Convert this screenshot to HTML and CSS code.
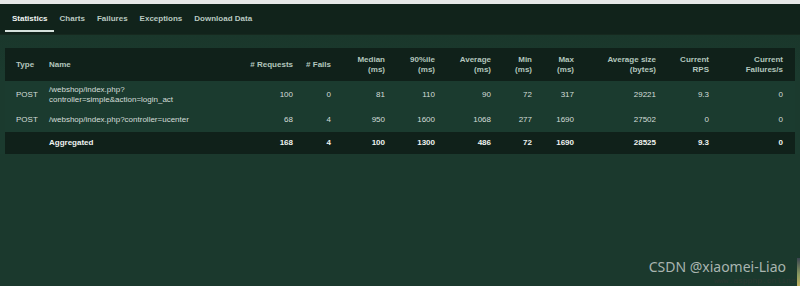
FILE: index.html
```html
<!DOCTYPE html>
<html>
<head>
<meta charset="utf-8">
<link rel="stylesheet" href="styles.css">
</head>
<body>
<div class="topstrip"></div>
<nav class="tabs">
  <a class="tab active">Statistics</a>
  <a class="tab">Charts</a>
  <a class="tab">Failures</a>
  <a class="tab">Exceptions</a>
  <a class="tab">Download Data</a>
</nav>
<main class="content">
  <table class="stats">
    <colgroup>
      <col class="c-type"><col class="c-name"><col class="c-req"><col class="c-fail"><col class="c-med"><col class="c-p90"><col class="c-avg"><col class="c-min"><col class="c-max"><col class="c-size"><col class="c-rps"><col class="c-fps">
    </colgroup>
    <thead>
      <tr>
        <th class="l first">Type</th>
        <th class="l">Name</th>
        <th># Requests</th>
        <th># Fails</th>
        <th>Median<br>(ms)</th>
        <th>90%ile<br>(ms)</th>
        <th>Average<br>(ms)</th>
        <th>Min<br>(ms)</th>
        <th>Max<br>(ms)</th>
        <th>Average size<br>(bytes)</th>
        <th>Current<br>RPS</th>
        <th class="last">Current<br>Failures/s</th>
      </tr>
    </thead>
    <tbody>
      <tr class="r1">
        <td class="l first">POST</td>
        <td class="l">/webshop/index.php?<br>controller=simple&amp;action=login_act</td>
        <td>100</td><td>0</td><td>81</td><td>110</td><td>90</td><td>72</td><td>317</td><td>29221</td><td>9.3</td><td class="last">0</td>
      </tr>
      <tr class="r2">
        <td class="l first">POST</td>
        <td class="l">/webshop/index.php?controller=ucenter</td>
        <td>68</td><td>4</td><td>950</td><td>1600</td><td>1068</td><td>277</td><td>1690</td><td>27502</td><td>0</td><td class="last">0</td>
      </tr>
      <tr class="total">
        <td class="l first"></td>
        <td class="l">Aggregated</td>
        <td>168</td><td>4</td><td>100</td><td>1300</td><td>486</td><td>72</td><td>1690</td><td>28525</td><td>9.3</td><td class="last">0</td>
      </tr>
    </tbody>
  </table>
</main>
<div class="watermark">CSDN @xiaomei-Liao</div>
<div class="site-mark">www.aspphp.online</div>
<div class="edge-bar"></div>
</body>
</html>
```
FILE: styles.css
```css
html, body {
  margin: 0;
  padding: 0;
}
body {
  width: 800px;
  height: 286px;
  overflow: hidden;
  position: relative;
  background: #1b392d;
  font-family: "Liberation Sans", Arial, sans-serif;
  color: #d3ddd8;
}
.topstrip {
  height: 4px;
  background: #e6e8e7;
}
.tabs {
  height: 31px;
  background: #11231b;
  display: flex;
  padding-left: 5px;
  box-sizing: border-box;
  border-bottom: 1px solid #16291f;
}
.tab {
  display: block;
  padding: 10px 6px 0 7px;
  font-size: 8px;
  font-weight: bold;
  color: #b9c9c1;
  height: 28px;
  box-sizing: border-box;
}
.tab + .tab {
  padding-left: 6px;
}
.tab.active {
  color: #f0f4f2;
  border-bottom: 2px solid #d6e1dc;
  padding-left: 7px;
  padding-right: 6px;
}
.content {
  padding: 13px 5px 0 5px;
  background: linear-gradient(#1a372b, #1b3a2e 40px);
}
.stats {
  width: 790px;
  table-layout: fixed;
  border-collapse: collapse;
  font-size: 8px;
  line-height: 10px;
}
.c-type { width: 38px; }
.c-name { width: 197px; }
.c-req { width: 59px; }
.c-fail { width: 38px; }
.c-med { width: 54px; }
.c-p90 { width: 50px; }
.c-avg { width: 56px; }
.c-min { width: 41px; }
.c-max { width: 42px; }
.c-size { width: 82px; }
.c-rps { width: 53px; }
.c-fps { width: 80px; }
th, td {
  padding: 0 6px;
  text-align: right;
  white-space: nowrap;
}
.l { text-align: left; }
.first { padding-left: 11px; }
.last { padding-right: 12px; }
thead tr {
  background: #10211a;
  height: 33px;
}
th {
  color: #b3c6bd;
  font-weight: bold;
}
tbody td {
  color: #d4ddd9;
}
.r1 {
  height: 27px;
  background: #1b3b2f;
}
.r2 {
  height: 24px;
  background: #1b3b2f;
}
.total {
  height: 22px;
  background: #10211a;
}
.total td {
  font-weight: bold;
  color: #eef3f0;
}
.watermark {
  position: absolute;
  right: 14px;
  top: 258px;
  font-family: "Noto Sans", "Liberation Sans", sans-serif;
  font-size: 14px;
  line-height: 18px;
  color: #a9b5b0;
}
.site-mark {
  position: absolute;
  left: 714px;
  top: 276px;
  font-family: "Liberation Mono", monospace;
  font-size: 8px;
  line-height: 9px;
  color: #2c3832;
  white-space: nowrap;
}
.edge-bar {
  position: absolute;
  right: 0;
  top: 258px;
  width: 3px;
  height: 28px;
  background: linear-gradient(#3a4450, #8a9a60 60%, #c0b060);
}
```
